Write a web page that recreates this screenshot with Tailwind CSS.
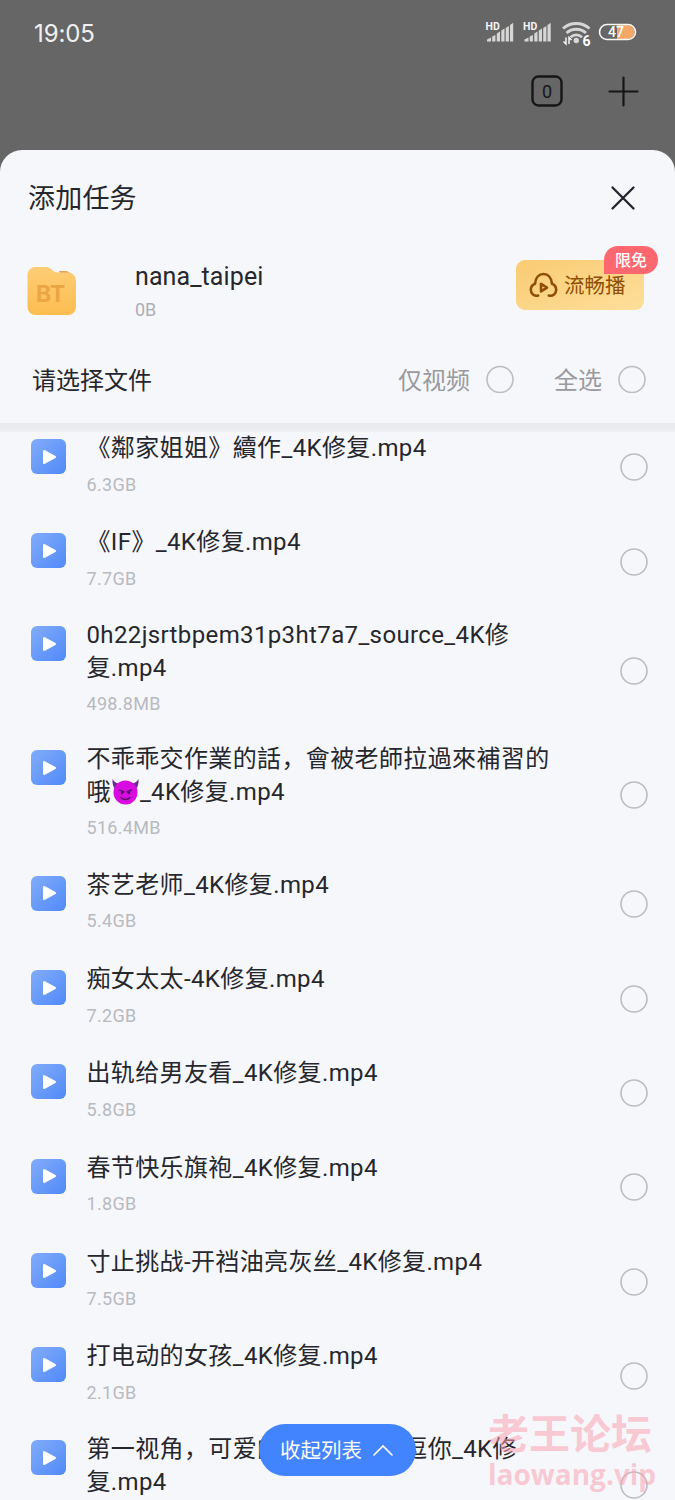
<!DOCTYPE html>
<html lang="zh-CN">

<head>
    <meta charset="UTF-8">
    <meta name="viewport" content="width=device-width, initial-scale=1.0">
    <script src="https://cdn.jsdelivr.net/npm/@tailwindcss/browser@4"></script>
    <title>添加任务</title>
</head>

<body class="bg-[#666666]">
    <div class="relative h-[1500px] w-[675px] overflow-hidden flex flex-col font-[Roboto,'Noto_Sans_CJK_SC',sans-serif] text-[#26272d]">
        <!-- Status bar -->
        <div class="h-[66px] shrink-0 flex items-center pl-[34px] pr-[38px] text-[#f0f0f0]">
            <span class="mt-[2px] text-[24px] tracking-[-0.1px] font-[Inter,sans-serif]">19:05</span>
            <svg class="ml-auto" width="152" height="28" viewBox="0 0 152 28">
                <g id="signal" fill="#d6d6d6">
                    <path d="M2 22.500v-2l4-2v4zM7.200 22.500v-5l3.200-1.600v6.600zM11.800 22.500v-8l3.200-2v10zM16.300 22.500v-11l3.200-2v13zM20.700 22.500V9l3.200-2v15.500zM25 22.500V6l3.200-2.200v18.700z" />
                    <text x="0.500" y="11" font-size="10.500" font-weight="700" fill="#f4f4f4" stroke="#666666" stroke-width="1.500" paint-order="stroke">HD</text>
                </g>
                <use href="#signal" x="37.500" />
                <g fill="none" stroke="#d6d6d6" stroke-width="2.800">
                    <path d="M78 9.500a20 20 0 0 1 26.500 0" />
                    <path d="M81.500 14a14.500 14.500 0 0 1 19.500 0" />
                    <path d="M85.500 18.200a8.500 8.500 0 0 1 11.500 0" />
                </g>
                <circle cx="91.300" cy="21.500" r="2.700" fill="#d6d6d6" />
                <path d="M81 18.500v6.500l-2.500-2.500M84 25v-6.500l2.500 2.500" fill="none" stroke="#f4f4f4" stroke-width="1.500" />
                <text x="97.500" y="26.500" font-size="14" font-weight="700" fill="#fff" stroke="#666666" stroke-width="2" paint-order="stroke">6</text>
                <path d="M132 6h10.500a7 7 0 0 1 0 14H132z" fill="#f4a868" />
                <rect x="114.500" y="5.500" width="36" height="15" rx="7.500" fill="none" stroke="#f8f8f8" stroke-width="1.600" />
                <text x="123" y="18" font-size="14" font-weight="500" fill="#fff">47</text>
            </svg>
        </div>

        <!-- Toolbar under the dimmed layer -->
        <div class="h-[84px] shrink-0 flex items-start justify-end gap-[45px] pt-[9px] pr-[36px]">
            <svg width="32" height="32" viewBox="0 0 32 32">
                <rect x="1.500" y="1.500" width="29" height="29" rx="6" fill="none" stroke="#161616" stroke-width="2.400" />
                <text x="16" y="22.500" font-size="18" text-anchor="middle" fill="#161616">0</text>
            </svg>
            <svg width="31" height="32" viewBox="0 0 31 32" stroke="#161616" stroke-width="2.200" stroke-linecap="round">
                <path d="M15.500 2.500v28M1.500 16.500h28" />
            </svg>
        </div>

        <!-- Sheet -->
        <div class="flex-1 min-h-0 flex flex-col rounded-t-[22px] bg-[#f6f7fb] overflow-hidden">
            <div class="h-[95px] shrink-0 flex items-center pl-[28px] pr-[39px]">
                <h1 class="mt-[3px] text-[27px] leading-[40px] tracking-[0.2px]">添加任务</h1>
                <svg class="ml-auto" width="26" height="26" viewBox="0 0 26 26" stroke="#22232f" stroke-width="2.300" stroke-linecap="round">
                    <path d="M2.500 2.500l21 21M23.500 2.500l-21 21" />
                </svg>
            </div>

            <div class="h-[90px] shrink-0 flex items-start pl-[27px] pr-[31px]">
                <svg class="mt-[21px]" width="49" height="50" viewBox="0 0 49 50">
                    <defs>
                        <linearGradient id="folder" x1="0" y1="0" x2="0" y2="1">
                            <stop offset="0" stop-color="#fdcd75" />
                            <stop offset="1" stop-color="#fdbd50" />
                        </linearGradient>
                    </defs>
                    <path d="M32 5h8l3 2-9 4z" fill="#e3a653" />
                    <path d="M0.500 9a8 8 0 0 1 8-8H19c2 0 3.500.700 5 2l2.500 2c1.200 1 2.500 1.400 4 1.400H41a8 8 0 0 1 8 8V41a8 8 0 0 1-8 8H8.500a8 8 0 0 1-8-8z" fill="url(#folder)" />
                    <text x="9" y="36" font-size="23" font-weight="700" fill="#eba544" font-family="Inter">BT</text>
                </svg>
                <div class="ml-[59px] mt-[16px]">
                    <div class="text-[25px] leading-[32px] tracking-[0.1px]">nana_taipei</div>
                    <div class="mt-[7px] text-[18px] leading-[20px] text-[#adafb4]">0B</div>
                </div>
                <div class="relative ml-auto mt-[15px] w-[128px] h-[50px] rounded-[9px] bg-linear-to-br from-[#facb72] to-[#fddf9b] flex items-center pl-[13px] gap-[6px] text-[#8f4e05]">
                    <svg width="29" height="26" viewBox="0 0 29 26" fill="none" stroke="currentColor" stroke-width="2.600" stroke-linecap="round" stroke-linejoin="round">
                        <path d="M9.200 23.500C5 24.500 1.800 21.500 1.800 17.800c0-3 1.700-5 4.200-6C6.500 5.500 10 2 14.500 2S22.500 5.500 23 11.800c2.500 1 4.200 3 4.200 6 0 3.700-3.200 6.700-7.400 5.700" />
                        <path d="M12 11.800v7.600l6-3.800z" />
                    </svg>
                    <span class="mt-[2px] text-[20.500px] leading-[30px]">流畅播</span>
                    <span class="absolute left-[88px] -top-[14px] w-[54px] h-[28px] rounded-[14px] rounded-bl-none bg-[#fd6870] text-white text-[16px] leading-[30px] text-center font-medium">限免</span>
                </div>
            </div>

            <div class="h-[88px] shrink-0 flex items-center pl-[32px] pr-[29px] text-[24px]">
                <span class="mt-[3px]">请选择文件</span>
                <span class="mt-[3px] ml-auto text-[#999a9e]">仅视频</span>
                <svg class="ml-[16px]" width="28" height="28"><circle cx="14" cy="14.500" r="13" fill="none" stroke="#bbbdc0" stroke-width="1.600" /></svg>
                <span class="mt-[3px] ml-[40px] text-[#999a9e]">全选</span>
                <svg class="ml-[16px]" width="28" height="28"><circle cx="14" cy="14.500" r="13" fill="none" stroke="#bbbdc0" stroke-width="1.600" /></svg>
            </div>
            <div class="h-[9px] shrink-0 bg-linear-to-b from-[#eaebef] from-50% to-[#f1f2f6]"></div>

            <div class="flex-1 min-h-0 overflow-hidden">
                <div id="files" class="-mt-[11.700px]"></div>
            </div>
        </div>

        <!-- Watermark -->
        <div class="absolute left-[488px] top-[1409px] text-[#fb9fb1]/55 font-bold">
            <div class="text-[41px] leading-[52px]">老王论坛</div>
            <div class="-mt-px text-[28px] leading-[28px] font-['Open_Sans',sans-serif]">laowang.vip</div>
        </div>

        <button class="absolute left-[259px] top-[1424px] w-[157px] h-[52px] rounded-full bg-[#4284fd] text-white text-[20.500px] flex items-center pl-[21px] gap-[11px]">
            <span class="mt-[2px]">收起列表</span>
            <svg width="20" height="12" viewBox="0 0 20 12" fill="none" stroke="currentColor" stroke-width="1.600" stroke-linecap="round">
                <path d="M1 11l9-9 9 9" />
            </svg>
        </button>
    </div>

    <script>
        const devil = `<svg class="inline-block align-[-5px]" width="29" height="27" viewBox="0 0 28 27">
            <path d="M1 1c-.5 5 1 9 4 12l6-7C7 6 3 5 1 1zM27 1c.5 5-1 9-4 12l-6-7c4 0 8-1 10-5z" fill="#6d2a91"/>
            <circle cx="14" cy="14.500" r="12" fill="#d80be0"/>
            <path d="M8 12l4.500 2M20 12l-4.500 2M9.500 19.500c2.500 2.600 6.500 2.600 9 0" fill="none" stroke="#5b0a70" stroke-width="1.500" stroke-linecap="round"/>
            <circle cx="10.500" cy="15" r="1.300" fill="#5b0a70"/><circle cx="17.500" cy="15" r="1.300" fill="#5b0a70"/>
        </svg>`;

        const files = [
            ['《鄰家姐姐》續作_4K修复.mp4', '6.3GB'],
            ['《IF》_4K修复.mp4', '7.7GB'],
            ['0h22jsrtbpem31p3ht7a7_source_4K修<br>复.mp4', '498.8MB'],
            ['不乖乖交作業的話，會被老師拉過來補習的<br>哦' + devil + '_4K修复.mp4', '516.4MB'],
            ['茶艺老师_4K修复.mp4', '5.4GB'],
            ['痴女太太-4K修复.mp4', '7.2GB'],
            ['出轨给男友看_4K修复.mp4', '5.8GB'],
            ['春节快乐旗袍_4K修复.mp4', '1.8GB'],
            ['寸止挑战-开裆油亮灰丝_4K修复.mp4', '7.5GB'],
            ['打电动的女孩_4K修复.mp4', '2.1GB'],
            ['第一视角，可爱的小女友来挑逗你_4K修<br>复.mp4', '1.2GB']
        ];

        document.getElementById('files').innerHTML = files.map(([name, size]) => {
            const rowClass = name.includes('<br>') ? 'h-[124px] pt-[17px]' : 'h-[94.350px] pt-[18.700px]';
            return `
            <div class="relative flex items-start pl-[31px] pr-[27px] ${rowClass}">
                <span class="shrink-0 size-[35px] rounded-[6px] bg-linear-to-br from-[#82acfa] to-[#5089f8] flex items-center justify-center">
                    <svg width="15" height="16" viewBox="0 0 15 16" class="ml-px"><path d="M2 2v12l11-6z" fill="#fff" stroke="#fff" stroke-width="2" stroke-linejoin="round"/></svg>
                </span>
                <div class="ml-[20.500px] -mt-[7px] whitespace-nowrap">
                    <div class="text-[24px] leading-[32.500px] tracking-[0.37px]">${name}</div>
                    <div class="mt-[10px] text-[18px] leading-[20px] tracking-[0.3px] text-[#b8babf]">${size}</div>
                </div>
                <svg class="absolute right-[27px] top-1/2 -translate-y-1/2" width="28" height="28"><circle cx="14" cy="14" r="13" fill="none" stroke="#bbbdc0" stroke-width="1.600"/></svg>
            </div>`;
        }).join('');
    </script>
</body>

</html>
